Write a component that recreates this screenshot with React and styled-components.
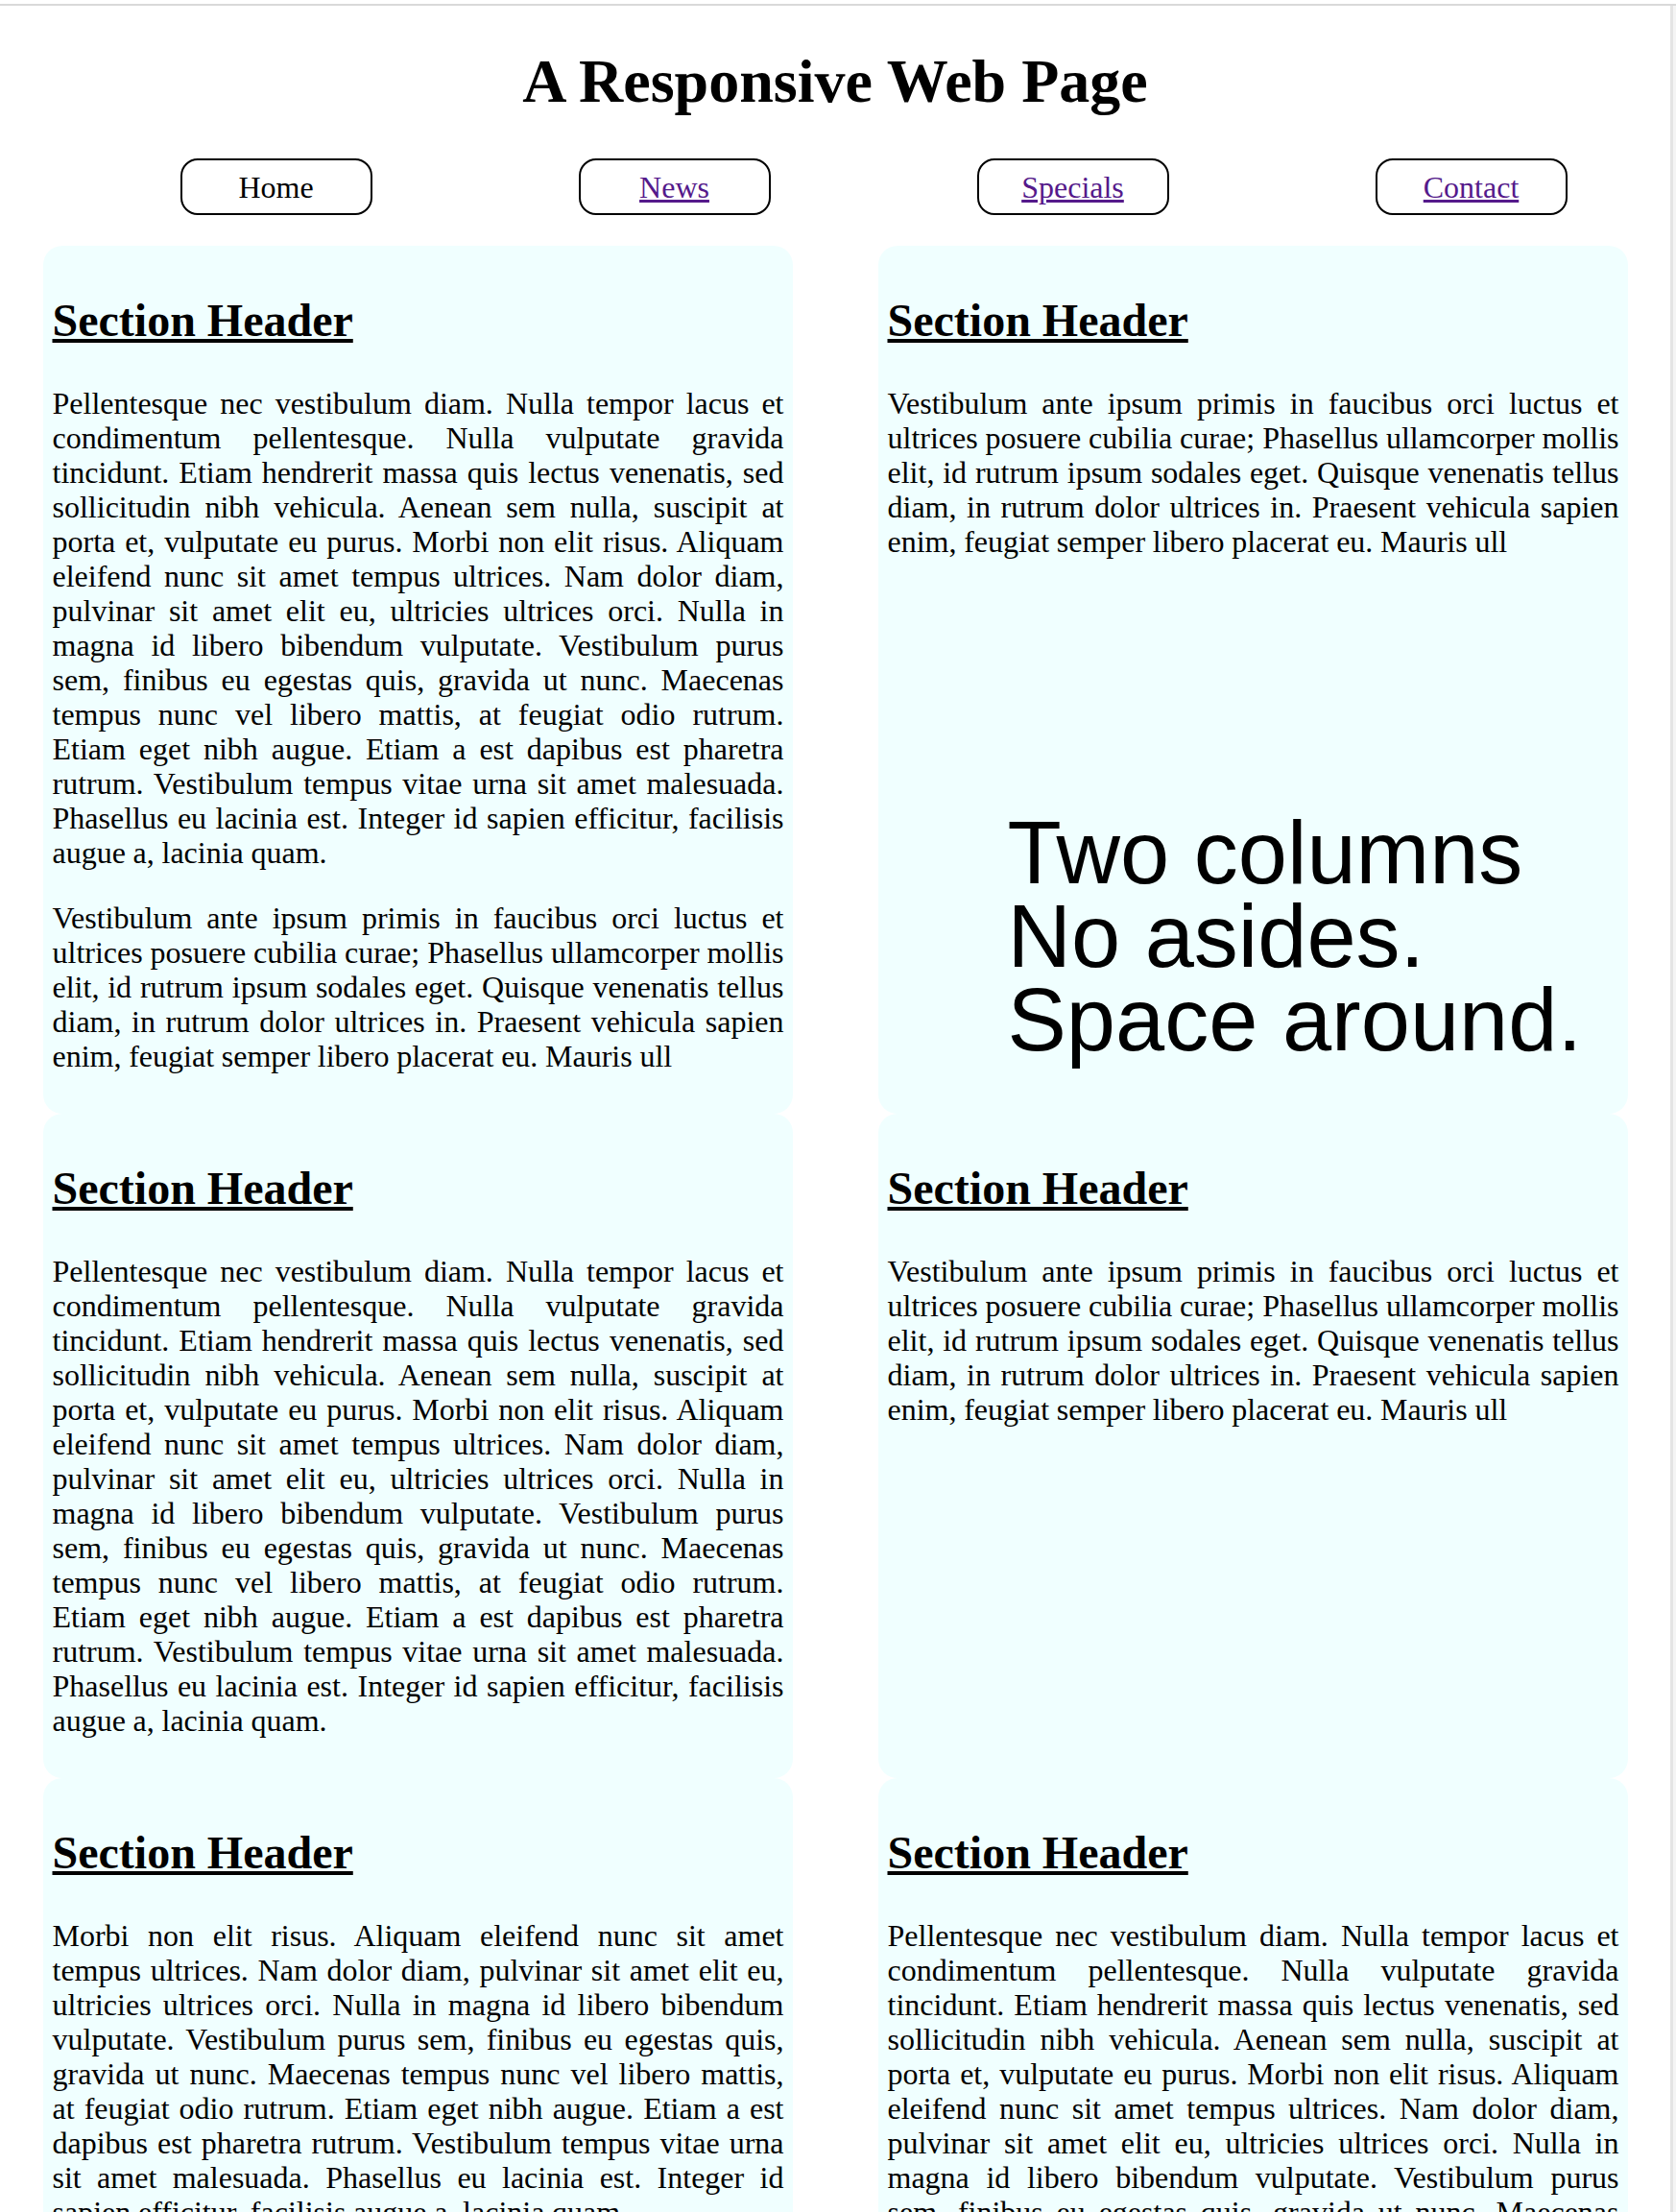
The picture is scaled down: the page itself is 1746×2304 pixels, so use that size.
import React from "react";
import styled, { createGlobalStyle } from "styled-components";

const PELL =
  "Pellentesque nec vestibulum diam. Nulla tempor lacus et condimentum pellentesque. Nulla vulputate gravida tincidunt. Etiam hendrerit massa quis lectus venenatis, sed sollicitudin nibh vehicula. Aenean sem nulla, suscipit at porta et, vulputate eu purus. Morbi non elit risus. Aliquam eleifend nunc sit amet tempus ultrices. Nam dolor diam, pulvinar sit amet elit eu, ultricies ultrices orci. Nulla in magna id libero bibendum vulputate. Vestibulum purus sem, finibus eu egestas quis, gravida ut nunc. Maecenas tempus nunc vel libero mattis, at feugiat odio rutrum. Etiam eget nibh augue. Etiam a est dapibus est pharetra rutrum. Vestibulum tempus vitae urna sit amet malesuada. Phasellus eu lacinia est. Integer id sapien efficitur, facilisis augue a, lacinia quam.";

const VEST =
  "Vestibulum ante ipsum primis in faucibus orci luctus et ultrices posuere cubilia curae; Phasellus ullamcorper mollis elit, id rutrum ipsum sodales eget. Quisque venenatis tellus diam, in rutrum dolor ultrices in. Praesent vehicula sapien enim, feugiat semper libero placerat eu. Mauris ull";

const MORBI =
  "Morbi non elit risus. Aliquam eleifend nunc sit amet tempus ultrices. Nam dolor diam, pulvinar sit amet elit eu, ultricies ultrices orci. Nulla in magna id libero bibendum vulputate. Vestibulum purus sem, finibus eu egestas quis, gravida ut nunc. Maecenas tempus nunc vel libero mattis, at feugiat odio rutrum. Etiam eget nibh augue. Etiam a est dapibus est pharetra rutrum. Vestibulum tempus vitae urna sit amet malesuada. Phasellus eu lacinia est. Integer id sapien efficitur, facilisis augue a, lacinia quam.";

const links = [
  { label: "Home", current: true },
  { label: "News" },
  { label: "Specials" },
  { label: "Contact" }
];

const sections = [
  { texts: [PELL, VEST] },
  { texts: [VEST], tagline: ["Two columns", "No asides.", "Space around."] },
  { texts: [PELL] },
  { texts: [VEST] },
  { texts: [MORBI] },
  { texts: [PELL, VEST] }
];

const App = () => {
  return (
    <Window>
      <GlobalStyle />
      <TopEdge />
      <Viewport>
        <Page>
          <Title>A Responsive Web Page</Title>
          <Nav>
            {links.map(link => (
              <NavItem key={link.label}>
                {link.current ? (
                  link.label
                ) : (
                  <NavLink href="#">{link.label}</NavLink>
                )}
              </NavItem>
            ))}
          </Nav>
          <Sections>
            {sections.map((section, i) => (
              <Card key={i}>
                <CardTitle>Section Header</CardTitle>
                {section.texts.map((text, j) => (
                  <Text key={j}>{text}</Text>
                ))}
                {section.tagline && (
                  <Tagline>
                    {section.tagline.map(line => (
                      <div key={line}>{line}</div>
                    ))}
                  </Tagline>
                )}
              </Card>
            ))}
          </Sections>
        </Page>
        <ScrollTrack />
      </Viewport>
    </Window>
  );
};

const GlobalStyle = createGlobalStyle`
  html, body {
    margin: 0;
    padding: 0;
    background: #fff;
  }

  body {
    font-family: "Liberation Serif", "Times New Roman", serif;
    font-size: 32px;
    color: #000;
  }
`;

const Window = styled.div`
  height: 100vh;
  display: flex;
  flex-direction: column;
  overflow: hidden;
`;

const TopEdge = styled.div`
  flex: none;
  height: 4px;
  background: #fff;
  border-bottom: 2px solid #d9d9d9;
`;

const Viewport = styled.div`
  flex: 1;
  min-height: 0;
  display: flex;
`;

const Page = styled.div`
  flex: 1;
  min-width: 0;
`;

const ScrollTrack = styled.div`
  flex: none;
  width: 3px;
  border-left: 3px solid #e4e4e4;
  background: #f4f4f4;
`;

const Title = styled.h1`
  margin: 42px 0 0;
  font-size: 64px;
  line-height: 73px;
  font-weight: bold;
  text-align: center;
`;

const Nav = styled.ul`
  list-style: none;
  display: flex;
  justify-content: space-around;
  margin: 44px 0 32px;
  padding: 0 0 0 80px;
`;

const NavItem = styled.li`
  box-sizing: border-box;
  width: 200px;
  height: 59px;
  display: flex;
  align-items: center;
  justify-content: center;
  border: 2px solid #000;
  border-radius: 18px;
  line-height: 36px;
`;

const NavLink = styled.a`
  color: #551a8b;
  text-decoration: underline;
`;

const Sections = styled.div`
  display: flex;
  flex-wrap: wrap;
  justify-content: space-around;
`;

const Card = styled.section`
  box-sizing: border-box;
  width: 781px;
  padding: 10px 9px;
  background: #f0ffff;
  border-radius: 20px;
`;

const CardTitle = styled.h2`
  margin: 40px 0;
  padding-left: 1px;
  font-size: 48px;
  line-height: 56px;
  font-weight: bold;
  text-decoration: underline;
`;

const Text = styled.p`
  margin: 32px 0;
  padding-left: 1px;
  font-size: 32px;
  line-height: 36px;
  text-align: justify;
  word-spacing: -0.3px;
`;

const Tagline = styled.div`
  margin: 263px 0 0 126px;
  font-family: "Liberation Sans", Arial, sans-serif;
  font-size: 92px;
  line-height: 87px;
`;

export default App;
